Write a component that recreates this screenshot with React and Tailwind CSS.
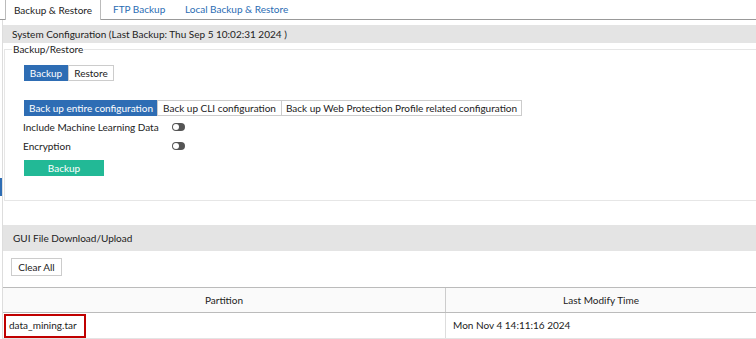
import React from 'react';

function Toggle() {
    return (
        <span className="relative inline-block w-[13px] h-[8px] rounded-full bg-[#555]">
            <span className="absolute left-[1px] top-[1px] w-[6px] h-[6px] rounded-full bg-white" />
        </span>
    );
}

export default function App() {
    const configTabs = [
        { label: 'Back up entire configuration', w: 'w-[134px]', active: true },
        { label: 'Back up CLI configuration', w: 'w-[125px]' },
        { label: 'Back up Web Protection Profile related configuration', w: 'w-[241px]' },
    ];

    return (
        <div className="relative w-[756px] h-[339px] overflow-hidden bg-white font-['Lato','Noto_Sans',sans-serif] text-[10px] text-[#222] whitespace-nowrap">
            {/* Top tabs */}
            <div className="flex h-[20px]">
                <div className="w-[5px] border-b border-[#999]" />
                <div className="w-[96px] flex items-center justify-center border-x border-[#bbb]">Backup &amp; Restore</div>
                <div className="w-[72px] flex items-center pl-[12px] border-b border-[#999] text-[#2a6cb3]">FTP Backup</div>
                <div className="flex items-center pl-[12px] border-b border-[#999] text-[#2a6cb3]">Local Backup &amp; Restore</div>
                <div className="flex-1 border-b border-[#999]" />
            </div>

            <div className="ml-[2px] border-l border-[#ddd] pt-[5px]">
                <div className="h-[18px] bg-[#e4e4e4] pl-[9px] flex items-center">
                    System Configuration (Last Backup: Thu Sep 5 10:02:31 2024 )
                </div>

                <fieldset className="ml-[1px] border-t border-l border-b border-[#e6e6e6] pb-[24px]">
                    <legend className="ml-[7px] px-[1px] leading-[12px]">Backup/Restore</legend>

                    <div className="mt-[10px] ml-[19px] flex">
                        <div className="h-[16px] w-[44px] flex items-center justify-center bg-[#2e6db4] text-white border border-[#2e6db4]">Backup</div>
                        <div className="h-[16px] w-[46px] flex items-center justify-center border border-[#ccc]">Restore</div>
                    </div>

                    <div className="mt-[19px] ml-[19px] flex">
                        {configTabs.map(t => (
                            <div
                                key={t.label}
                                className={`h-[16px] ${t.w} flex items-center justify-center border ${t.active ? 'bg-[#2e6db4] border-[#2e6db4] text-white' : 'border-[#ccc] -ml-[1px]'}`}
                            >
                                {t.label}
                            </div>
                        ))}
                    </div>

                    <div className="mt-[3px] ml-[18px] flex items-center h-[16px]">
                        <span className="w-[149px]">Include Machine Learning Data</span>
                        <Toggle />
                    </div>
                    <div className="mt-[3px] ml-[18px] flex items-center h-[16px]">
                        <span className="w-[149px]">Encryption</span>
                        <Toggle />
                    </div>

                    <div className="mt-[6px] ml-[19px] h-[16px] w-[80px] flex items-center justify-center bg-[#22b996] text-white">Backup</div>
                </fieldset>

                <div className="mt-[24px] h-[26px] bg-[#e4e4e4] pl-[10px] flex items-center">GUI File Download/Upload</div>

                <div className="pt-[7px] pl-[8px] pb-[11px]">
                    <div className="h-[18px] w-[51px] flex items-center justify-center border border-[#ccc]">Clear All</div>
                </div>

                <div className="border-t border-[#bbb]">
                    <div className="flex h-[25px] bg-[#fafafa] border-b border-[#bbb]">
                        <div className="w-[443px] flex items-center justify-center border-r border-[#ccc]">Partition</div>
                        <div className="flex-1 flex items-center justify-center">Last Modify Time</div>
                    </div>
                    <div className="flex h-[26px] border-b border-[#e4e4e4]">
                        <div className="w-[443px] flex items-center border-r border-[#ddd] pl-[1px]">
                            <span className="h-[24px] w-[82px] flex items-center pl-[3px] border-2 border-[#c00000]">data_mining.tar</span>
                        </div>
                        <div className="flex-1 flex items-center pl-[7px]">Mon Nov 4 14:11:16 2024</div>
                    </div>
                </div>
            </div>

            {/* small blue edge marker */}
            <div className="absolute left-0 top-[178px] w-[2px] h-[18px] bg-[#2e6db4]" />
        </div>
    );
}
